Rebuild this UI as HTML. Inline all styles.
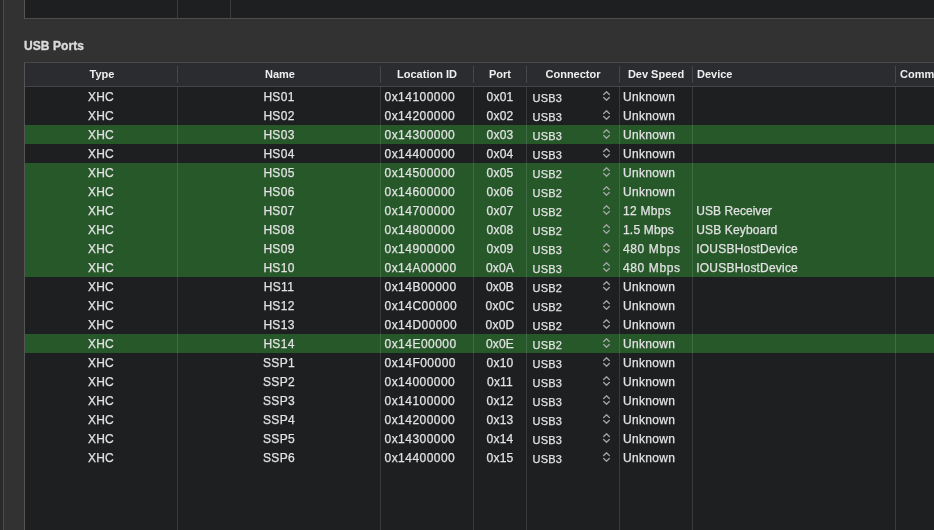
<!DOCTYPE html><html><head><meta charset="utf-8"><title>USB Ports</title><style>
html,body{margin:0;padding:0;}
body{width:934px;height:530px;overflow:hidden;background:#323232;position:relative;font-family:"Liberation Sans",sans-serif;color:#e2e2e2;font-size:12px;-webkit-font-smoothing:antialiased;}
.abs{position:absolute;}
.strip{left:0;top:0;width:3px;height:530px;background:#2a2a2a;}
.stripline{left:3px;top:0;width:1px;height:530px;background:#4b4b4b;}
.toptable{left:24px;top:-1px;width:920px;height:18px;background:#1e1f21;border:1px solid #555;border-bottom-color:#4e4e4f;box-sizing:content-box;}
.title{letter-spacing:0.08px;-webkit-text-stroke:0.35px currentColor;left:23.6px;top:38px;height:16px;line-height:16px;font-weight:bold;font-size:12px;color:#dcdcdc;white-space:nowrap;}
.table{left:24px;top:62px;width:920px;height:480px;background:#1e1f21;border:1px solid #555;border-top-color:#48494b;}
.header{left:25px;top:63px;width:920px;height:23px;background:#2b2c2f;}
.hline{left:25px;top:86px;width:920px;height:1px;background:#434446;}
.hsep{top:66px;width:1px;height:17px;background:#464749;}
.vsep{top:87px;width:1px;height:450px;background:rgba(255,255,255,0.12);}
.vsept{top:0;width:1px;height:18px;background:rgba(255,255,255,0.13);}
.h{top:63px;height:23px;line-height:23px;font-weight:bold;font-size:11px;color:#efefef;white-space:nowrap;text-align:center;}
.row{left:25px;width:920px;height:19px;}
.c{-webkit-text-stroke:0.25px currentColor;}
.row,.h,.title{will-change:transform;}
.row.g{background:#26582a;}
.c{position:absolute;top:1px;height:19px;line-height:19px;white-space:nowrap;}
.ctr{text-align:center;}
.u{font-size:11px;top:2px;letter-spacing:0.25px;}
.typ{letter-spacing:0.2px;}.nm{letter-spacing:0.3px;}.loc{letter-spacing:0.47px;}.port{letter-spacing:0.2px;}.spd{letter-spacing:0.3px;}.spd.m{letter-spacing:0.5px;}.dev{letter-spacing:0.12px;}
.chev{position:absolute;left:578px;top:4px;width:7px;height:10px;}
</style></head><body>
<div class="abs strip"></div><div class="abs stripline"></div>
<div class="abs toptable"></div>
<div class="abs vsept" style="left:177px"></div><div class="abs vsept" style="left:230px"></div>
<div class="abs title">USB Ports</div>
<div class="abs table"></div><div class="abs header"></div><div class="abs hline"></div>
<div class="abs row" style="top:87px"><span class="c ctr typ" style="left:0;width:152px">XHC</span><span class="c ctr nm" style="left:153px;width:202px">HS01</span><span class="c loc" style="left:359.5px">0x14100000</span><span class="c ctr port" style="left:449px;width:52px">0x01</span><span class="c u" style="left:507.5px">USB3</span><svg class="chev" viewBox="0 0 7 10"><path d="M0.7 3.5 L3.5 0.8 L6.3 3.5 M0.7 6.5 L3.5 9.2 L6.3 6.5" fill="none" stroke="#a4a4a4" stroke-width="1.3" stroke-linecap="round" stroke-linejoin="round"/></svg><span class="c spd" style="left:598px">Unknown</span></div>
<div class="abs row" style="top:106px"><span class="c ctr typ" style="left:0;width:152px">XHC</span><span class="c ctr nm" style="left:153px;width:202px">HS02</span><span class="c loc" style="left:359.5px">0x14200000</span><span class="c ctr port" style="left:449px;width:52px">0x02</span><span class="c u" style="left:507.5px">USB3</span><svg class="chev" viewBox="0 0 7 10"><path d="M0.7 3.5 L3.5 0.8 L6.3 3.5 M0.7 6.5 L3.5 9.2 L6.3 6.5" fill="none" stroke="#a4a4a4" stroke-width="1.3" stroke-linecap="round" stroke-linejoin="round"/></svg><span class="c spd" style="left:598px">Unknown</span></div>
<div class="abs row g" style="top:125px"><span class="c ctr typ" style="left:0;width:152px">XHC</span><span class="c ctr nm" style="left:153px;width:202px">HS03</span><span class="c loc" style="left:359.5px">0x14300000</span><span class="c ctr port" style="left:449px;width:52px">0x03</span><span class="c u" style="left:507.5px">USB3</span><svg class="chev" viewBox="0 0 7 10"><path d="M0.7 3.5 L3.5 0.8 L6.3 3.5 M0.7 6.5 L3.5 9.2 L6.3 6.5" fill="none" stroke="#a4a4a4" stroke-width="1.3" stroke-linecap="round" stroke-linejoin="round"/></svg><span class="c spd" style="left:598px">Unknown</span></div>
<div class="abs row" style="top:144px"><span class="c ctr typ" style="left:0;width:152px">XHC</span><span class="c ctr nm" style="left:153px;width:202px">HS04</span><span class="c loc" style="left:359.5px">0x14400000</span><span class="c ctr port" style="left:449px;width:52px">0x04</span><span class="c u" style="left:507.5px">USB3</span><svg class="chev" viewBox="0 0 7 10"><path d="M0.7 3.5 L3.5 0.8 L6.3 3.5 M0.7 6.5 L3.5 9.2 L6.3 6.5" fill="none" stroke="#a4a4a4" stroke-width="1.3" stroke-linecap="round" stroke-linejoin="round"/></svg><span class="c spd" style="left:598px">Unknown</span></div>
<div class="abs row g" style="top:163px"><span class="c ctr typ" style="left:0;width:152px">XHC</span><span class="c ctr nm" style="left:153px;width:202px">HS05</span><span class="c loc" style="left:359.5px">0x14500000</span><span class="c ctr port" style="left:449px;width:52px">0x05</span><span class="c u" style="left:507.5px">USB2</span><svg class="chev" viewBox="0 0 7 10"><path d="M0.7 3.5 L3.5 0.8 L6.3 3.5 M0.7 6.5 L3.5 9.2 L6.3 6.5" fill="none" stroke="#a4a4a4" stroke-width="1.3" stroke-linecap="round" stroke-linejoin="round"/></svg><span class="c spd" style="left:598px">Unknown</span></div>
<div class="abs row g" style="top:182px"><span class="c ctr typ" style="left:0;width:152px">XHC</span><span class="c ctr nm" style="left:153px;width:202px">HS06</span><span class="c loc" style="left:359.5px">0x14600000</span><span class="c ctr port" style="left:449px;width:52px">0x06</span><span class="c u" style="left:507.5px">USB2</span><svg class="chev" viewBox="0 0 7 10"><path d="M0.7 3.5 L3.5 0.8 L6.3 3.5 M0.7 6.5 L3.5 9.2 L6.3 6.5" fill="none" stroke="#a4a4a4" stroke-width="1.3" stroke-linecap="round" stroke-linejoin="round"/></svg><span class="c spd" style="left:598px">Unknown</span></div>
<div class="abs row g" style="top:201px"><span class="c ctr typ" style="left:0;width:152px">XHC</span><span class="c ctr nm" style="left:153px;width:202px">HS07</span><span class="c loc" style="left:359.5px">0x14700000</span><span class="c ctr port" style="left:449px;width:52px">0x07</span><span class="c u" style="left:507.5px">USB2</span><svg class="chev" viewBox="0 0 7 10"><path d="M0.7 3.5 L3.5 0.8 L6.3 3.5 M0.7 6.5 L3.5 9.2 L6.3 6.5" fill="none" stroke="#a4a4a4" stroke-width="1.3" stroke-linecap="round" stroke-linejoin="round"/></svg><span class="c spd" style="left:598px;letter-spacing:0.27px">12 Mbps</span><span class="c dev" style="left:671.3px;letter-spacing:0.04px">USB Receiver</span></div>
<div class="abs row g" style="top:220px"><span class="c ctr typ" style="left:0;width:152px">XHC</span><span class="c ctr nm" style="left:153px;width:202px">HS08</span><span class="c loc" style="left:359.5px">0x14800000</span><span class="c ctr port" style="left:449px;width:52px">0x08</span><span class="c u" style="left:507.5px">USB2</span><svg class="chev" viewBox="0 0 7 10"><path d="M0.7 3.5 L3.5 0.8 L6.3 3.5 M0.7 6.5 L3.5 9.2 L6.3 6.5" fill="none" stroke="#a4a4a4" stroke-width="1.3" stroke-linecap="round" stroke-linejoin="round"/></svg><span class="c spd" style="left:598px;letter-spacing:0.2px">1.5 Mbps</span><span class="c dev" style="left:671.3px;letter-spacing:0.14px">USB Keyboard</span></div>
<div class="abs row g" style="top:239px"><span class="c ctr typ" style="left:0;width:152px">XHC</span><span class="c ctr nm" style="left:153px;width:202px">HS09</span><span class="c loc" style="left:359.5px">0x14900000</span><span class="c ctr port" style="left:449px;width:52px">0x09</span><span class="c u" style="left:507.5px">USB3</span><svg class="chev" viewBox="0 0 7 10"><path d="M0.7 3.5 L3.5 0.8 L6.3 3.5 M0.7 6.5 L3.5 9.2 L6.3 6.5" fill="none" stroke="#a4a4a4" stroke-width="1.3" stroke-linecap="round" stroke-linejoin="round"/></svg><span class="c spd" style="left:598px;letter-spacing:0.62px">480 Mbps</span><span class="c dev" style="left:671.3px;letter-spacing:0.2px">IOUSBHostDevice</span></div>
<div class="abs row g" style="top:258px"><span class="c ctr typ" style="left:0;width:152px">XHC</span><span class="c ctr nm" style="left:153px;width:202px">HS10</span><span class="c loc" style="left:359.5px">0x14A00000</span><span class="c ctr port" style="left:449px;width:52px">0x0A</span><span class="c u" style="left:507.5px">USB3</span><svg class="chev" viewBox="0 0 7 10"><path d="M0.7 3.5 L3.5 0.8 L6.3 3.5 M0.7 6.5 L3.5 9.2 L6.3 6.5" fill="none" stroke="#a4a4a4" stroke-width="1.3" stroke-linecap="round" stroke-linejoin="round"/></svg><span class="c spd" style="left:598px;letter-spacing:0.62px">480 Mbps</span><span class="c dev" style="left:671.3px;letter-spacing:0.2px">IOUSBHostDevice</span></div>
<div class="abs row" style="top:277px"><span class="c ctr typ" style="left:0;width:152px">XHC</span><span class="c ctr nm" style="left:153px;width:202px">HS11</span><span class="c loc" style="left:359.5px">0x14B00000</span><span class="c ctr port" style="left:449px;width:52px">0x0B</span><span class="c u" style="left:507.5px">USB2</span><svg class="chev" viewBox="0 0 7 10"><path d="M0.7 3.5 L3.5 0.8 L6.3 3.5 M0.7 6.5 L3.5 9.2 L6.3 6.5" fill="none" stroke="#a4a4a4" stroke-width="1.3" stroke-linecap="round" stroke-linejoin="round"/></svg><span class="c spd" style="left:598px">Unknown</span></div>
<div class="abs row" style="top:296px"><span class="c ctr typ" style="left:0;width:152px">XHC</span><span class="c ctr nm" style="left:153px;width:202px">HS12</span><span class="c loc" style="left:359.5px">0x14C00000</span><span class="c ctr port" style="left:449px;width:52px">0x0C</span><span class="c u" style="left:507.5px">USB2</span><svg class="chev" viewBox="0 0 7 10"><path d="M0.7 3.5 L3.5 0.8 L6.3 3.5 M0.7 6.5 L3.5 9.2 L6.3 6.5" fill="none" stroke="#a4a4a4" stroke-width="1.3" stroke-linecap="round" stroke-linejoin="round"/></svg><span class="c spd" style="left:598px">Unknown</span></div>
<div class="abs row" style="top:315px"><span class="c ctr typ" style="left:0;width:152px">XHC</span><span class="c ctr nm" style="left:153px;width:202px">HS13</span><span class="c loc" style="left:359.5px">0x14D00000</span><span class="c ctr port" style="left:449px;width:52px">0x0D</span><span class="c u" style="left:507.5px">USB2</span><svg class="chev" viewBox="0 0 7 10"><path d="M0.7 3.5 L3.5 0.8 L6.3 3.5 M0.7 6.5 L3.5 9.2 L6.3 6.5" fill="none" stroke="#a4a4a4" stroke-width="1.3" stroke-linecap="round" stroke-linejoin="round"/></svg><span class="c spd" style="left:598px">Unknown</span></div>
<div class="abs row g" style="top:334px"><span class="c ctr typ" style="left:0;width:152px">XHC</span><span class="c ctr nm" style="left:153px;width:202px">HS14</span><span class="c loc" style="left:359.5px">0x14E00000</span><span class="c ctr port" style="left:449px;width:52px">0x0E</span><span class="c u" style="left:507.5px">USB2</span><svg class="chev" viewBox="0 0 7 10"><path d="M0.7 3.5 L3.5 0.8 L6.3 3.5 M0.7 6.5 L3.5 9.2 L6.3 6.5" fill="none" stroke="#a4a4a4" stroke-width="1.3" stroke-linecap="round" stroke-linejoin="round"/></svg><span class="c spd" style="left:598px">Unknown</span></div>
<div class="abs row" style="top:353px"><span class="c ctr typ" style="left:0;width:152px">XHC</span><span class="c ctr nm" style="left:153px;width:202px">SSP1</span><span class="c loc" style="left:359.5px">0x14F00000</span><span class="c ctr port" style="left:449px;width:52px">0x10</span><span class="c u" style="left:507.5px">USB3</span><svg class="chev" viewBox="0 0 7 10"><path d="M0.7 3.5 L3.5 0.8 L6.3 3.5 M0.7 6.5 L3.5 9.2 L6.3 6.5" fill="none" stroke="#a4a4a4" stroke-width="1.3" stroke-linecap="round" stroke-linejoin="round"/></svg><span class="c spd" style="left:598px">Unknown</span></div>
<div class="abs row" style="top:372px"><span class="c ctr typ" style="left:0;width:152px">XHC</span><span class="c ctr nm" style="left:153px;width:202px">SSP2</span><span class="c loc" style="left:359.5px">0x14000000</span><span class="c ctr port" style="left:449px;width:52px">0x11</span><span class="c u" style="left:507.5px">USB3</span><svg class="chev" viewBox="0 0 7 10"><path d="M0.7 3.5 L3.5 0.8 L6.3 3.5 M0.7 6.5 L3.5 9.2 L6.3 6.5" fill="none" stroke="#a4a4a4" stroke-width="1.3" stroke-linecap="round" stroke-linejoin="round"/></svg><span class="c spd" style="left:598px">Unknown</span></div>
<div class="abs row" style="top:391px"><span class="c ctr typ" style="left:0;width:152px">XHC</span><span class="c ctr nm" style="left:153px;width:202px">SSP3</span><span class="c loc" style="left:359.5px">0x14100000</span><span class="c ctr port" style="left:449px;width:52px">0x12</span><span class="c u" style="left:507.5px">USB3</span><svg class="chev" viewBox="0 0 7 10"><path d="M0.7 3.5 L3.5 0.8 L6.3 3.5 M0.7 6.5 L3.5 9.2 L6.3 6.5" fill="none" stroke="#a4a4a4" stroke-width="1.3" stroke-linecap="round" stroke-linejoin="round"/></svg><span class="c spd" style="left:598px">Unknown</span></div>
<div class="abs row" style="top:410px"><span class="c ctr typ" style="left:0;width:152px">XHC</span><span class="c ctr nm" style="left:153px;width:202px">SSP4</span><span class="c loc" style="left:359.5px">0x14200000</span><span class="c ctr port" style="left:449px;width:52px">0x13</span><span class="c u" style="left:507.5px">USB3</span><svg class="chev" viewBox="0 0 7 10"><path d="M0.7 3.5 L3.5 0.8 L6.3 3.5 M0.7 6.5 L3.5 9.2 L6.3 6.5" fill="none" stroke="#a4a4a4" stroke-width="1.3" stroke-linecap="round" stroke-linejoin="round"/></svg><span class="c spd" style="left:598px">Unknown</span></div>
<div class="abs row" style="top:429px"><span class="c ctr typ" style="left:0;width:152px">XHC</span><span class="c ctr nm" style="left:153px;width:202px">SSP5</span><span class="c loc" style="left:359.5px">0x14300000</span><span class="c ctr port" style="left:449px;width:52px">0x14</span><span class="c u" style="left:507.5px">USB3</span><svg class="chev" viewBox="0 0 7 10"><path d="M0.7 3.5 L3.5 0.8 L6.3 3.5 M0.7 6.5 L3.5 9.2 L6.3 6.5" fill="none" stroke="#a4a4a4" stroke-width="1.3" stroke-linecap="round" stroke-linejoin="round"/></svg><span class="c spd" style="left:598px">Unknown</span></div>
<div class="abs row" style="top:448px"><span class="c ctr typ" style="left:0;width:152px">XHC</span><span class="c ctr nm" style="left:153px;width:202px">SSP6</span><span class="c loc" style="left:359.5px">0x14400000</span><span class="c ctr port" style="left:449px;width:52px">0x15</span><span class="c u" style="left:507.5px">USB3</span><svg class="chev" viewBox="0 0 7 10"><path d="M0.7 3.5 L3.5 0.8 L6.3 3.5 M0.7 6.5 L3.5 9.2 L6.3 6.5" fill="none" stroke="#a4a4a4" stroke-width="1.3" stroke-linecap="round" stroke-linejoin="round"/></svg><span class="c spd" style="left:598px">Unknown</span></div>
<div class="abs vsep" style="left:177px"></div><div class="abs hsep" style="left:177px"></div>
<div class="abs vsep" style="left:380px"></div><div class="abs hsep" style="left:380px"></div>
<div class="abs vsep" style="left:473px"></div><div class="abs hsep" style="left:473px"></div>
<div class="abs vsep" style="left:526px"></div><div class="abs hsep" style="left:526px"></div>
<div class="abs vsep" style="left:619px"></div><div class="abs hsep" style="left:619px"></div>
<div class="abs vsep" style="left:692px"></div><div class="abs hsep" style="left:692px"></div>
<div class="abs vsep" style="left:895px"></div><div class="abs hsep" style="left:895px"></div>
<div class="abs h" style="left:25.6px;width:152px;">Type</div>
<div class="abs h" style="left:178.6px;width:202px;">Name</div>
<div class="abs h" style="left:381px;width:92px;">Location ID</div>
<div class="abs h" style="left:474px;width:52px;">Port</div>
<div class="abs h" style="left:527px;width:92px;">Connector</div>
<div class="abs h" style="left:620px;width:72px;">Dev Speed</div>
<div class="abs h" style="left:697px;width:100px;text-align:left;">Device</div>
<div class="abs h" style="left:900px;width:100px;text-align:left;">Comment</div>
</body></html>
